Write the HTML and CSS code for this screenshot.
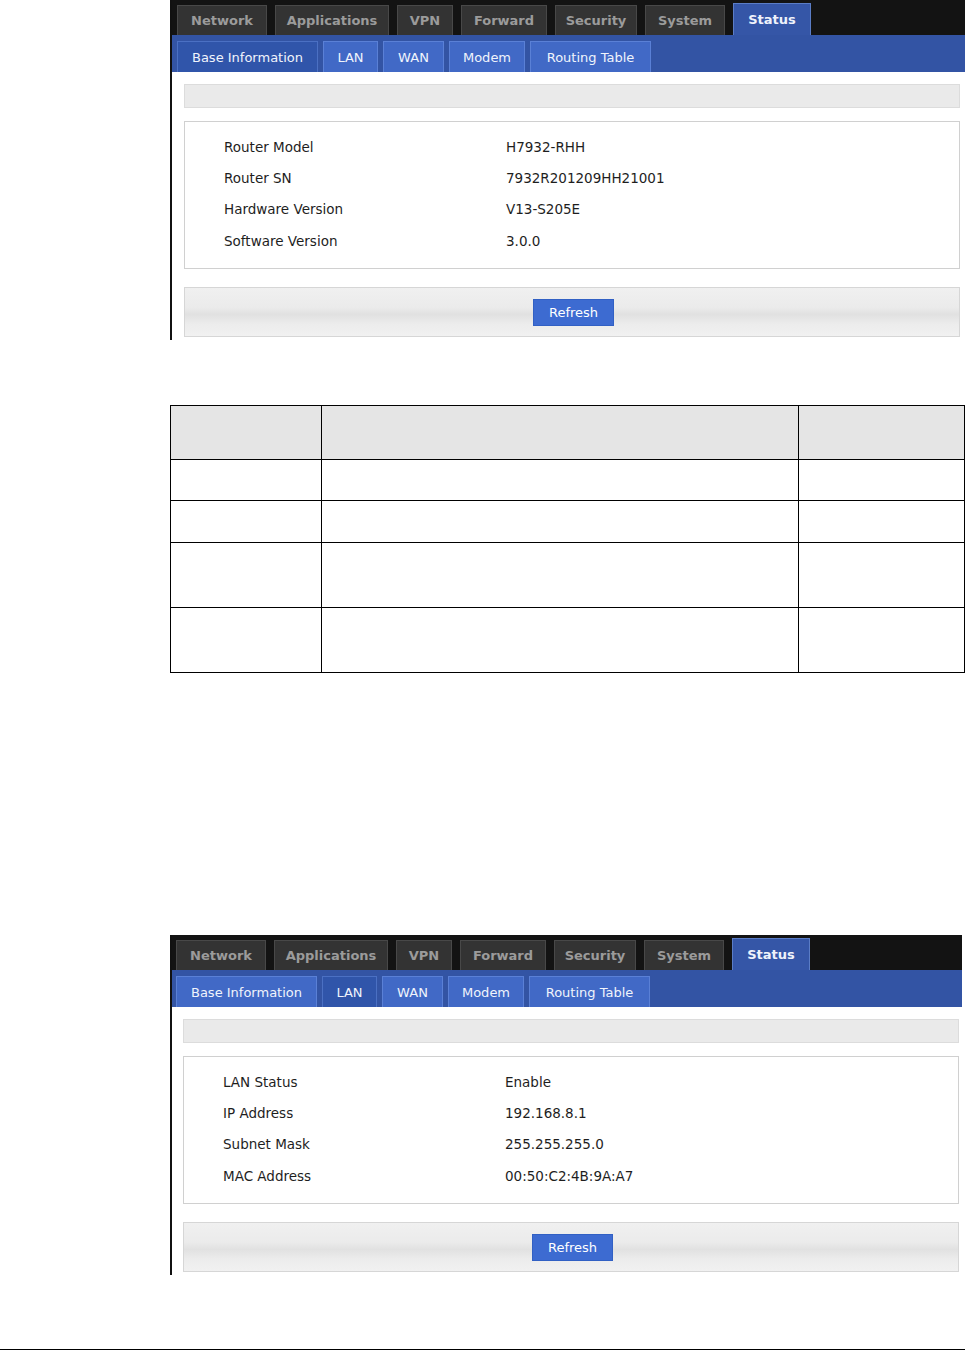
FILE: index.html
```html
<!DOCTYPE html>
<html lang="en">
<head>
    <meta charset="UTF-8">
    <title>Status - Base Information / LAN</title>
    <link rel="stylesheet" href="styles.css">
</head>
<body>
    <div class="page">
        <!-- screenshot 1: base information -->
        <div class="router">
            <div class="main-nav">
                <a>Network</a>
                <a>Applications</a>
                <a>VPN</a>
                <a>Forward</a>
                <a>Security</a>
                <a>System</a>
                <a class="active">Status</a>
            </div>
            <div class="sub-nav">
                <a class="active">Base Information</a>
                <a>LAN</a>
                <a>WAN</a>
                <a>Modem</a>
                <a>Routing Table</a>
            </div>
            <div class="content">
                <div class="title-bar"></div>
                <div class="info">
                    <div class="info-row"><span class="info-label">Router Model</span><span>H7932-RHH</span></div>
                    <div class="info-row"><span class="info-label">Router SN</span><span>7932R201209HH21001</span></div>
                    <div class="info-row"><span class="info-label">Hardware Version</span><span>V13-S205E</span></div>
                    <div class="info-row"><span class="info-label">Software Version</span><span>3.0.0</span></div>
                </div>
                <div class="actions">
                    <button class="btn">Refresh</button>
                </div>
            </div>
        </div>

        <table class="doc-table">
            <tr class="head"><td class="c1">&nbsp;</td><td class="c2">&nbsp;</td><td class="c3">&nbsp;</td></tr>
            <tr class="r-short"><td>&nbsp;</td><td>&nbsp;</td><td>&nbsp;</td></tr>
            <tr class="r-short2"><td>&nbsp;</td><td>&nbsp;</td><td>&nbsp;</td></tr>
            <tr class="r-tall"><td>&nbsp;</td><td>&nbsp;</td><td>&nbsp;</td></tr>
            <tr class="r-tall"><td>&nbsp;</td><td>&nbsp;</td><td>&nbsp;</td></tr>
        </table>

        <!-- screenshot 2: LAN -->
        <div class="router router-second">
            <div class="main-nav">
                <a>Network</a>
                <a>Applications</a>
                <a>VPN</a>
                <a>Forward</a>
                <a>Security</a>
                <a>System</a>
                <a class="active">Status</a>
            </div>
            <div class="sub-nav">
                <a>Base Information</a>
                <a class="active">LAN</a>
                <a>WAN</a>
                <a>Modem</a>
                <a>Routing Table</a>
            </div>
            <div class="content">
                <div class="title-bar"></div>
                <div class="info">
                    <div class="info-row"><span class="info-label">LAN Status</span><span>Enable</span></div>
                    <div class="info-row"><span class="info-label">IP Address</span><span>192.168.8.1</span></div>
                    <div class="info-row"><span class="info-label">Subnet Mask</span><span>255.255.255.0</span></div>
                    <div class="info-row"><span class="info-label">MAC Address</span><span>00:50:C2:4B:9A:A7</span></div>
                </div>
                <div class="actions">
                    <button class="btn">Refresh</button>
                </div>
            </div>
        </div>
    </div>
    <hr class="page-rule">
</body>
</html>
```

FILE: styles.css
```css
body {
    margin: 0;
    font-family: "DejaVu Sans", Verdana, sans-serif;
    background: #fff;
    color: #222;
}
.page {
    padding-left: 170px;
}

/* router ui screenshot */
.router {
    width: 795px;
    box-sizing: border-box;
    border-left: 2px solid #111;
    padding-bottom: 3px;
    background: #fff;
}
.main-nav {
    height: 35px;
    background: #131313;
    display: flex;
    align-items: flex-end;
    gap: 8px;
    padding-left: 5px;
}
.main-nav a {
    box-sizing: border-box;
    height: 30px;
    line-height: 29px;
    text-align: center;
    background: #333;
    border: 1px solid #484848;
    border-bottom: none;
    color: #9b9b9b;
    font-size: 13px;
    font-weight: bold;
}
/* tab widths as in the firmware ui */
.main-nav a:nth-child(1) { width: 90px; }
.main-nav a:nth-child(2) { width: 114px; }
.main-nav a:nth-child(3) { width: 56px; }
.main-nav a:nth-child(4) { width: 86px; }
.main-nav a:nth-child(5) { width: 82px; }
.main-nav a:nth-child(6) { width: 80px; }
.main-nav a:nth-child(7) { width: 78px; }
.main-nav a.active {
    height: 32px;
    line-height: 31px;
    background: #3556a7;
    border-color: #5b7dc6;
    color: #eef2fb;
}
.sub-nav {
    height: 37px;
    background: #3354a4;
    display: flex;
    align-items: flex-end;
    gap: 5px;
    padding-left: 5px;
}
.sub-nav a {
    box-sizing: border-box;
    height: 31px;
    line-height: 31px;
    text-align: center;
    background: #4169c6;
    border: 1px solid #5a80d6;
    border-bottom: none;
    color: #f0f4fc;
    font-size: 13px;
}
.sub-nav a:nth-child(1) { width: 141px; }
.sub-nav a:nth-child(2) { width: 55px; }
.sub-nav a:nth-child(3) { width: 61px; }
.sub-nav a:nth-child(4) { width: 76px; }
.sub-nav a:nth-child(5) { width: 121px; }
.sub-nav a.active {
    background: #3055aa;
    border-color: #4b70c3;
}
.content {
    padding: 12px 5px 0 12px;
}
.title-bar {
    height: 24px;
    box-sizing: border-box;
    background: #eaeaea;
    border: 1px solid #dcdcdc;
}
.info {
    margin-top: 13px;
    border: 1px solid #d0d0d0;
    padding: 9px 0 12px 39px;
}
.info-row {
    display: flex;
    align-items: center;
    height: 31.3px;
    font-size: 13.5px;
    color: #1e1e1e;
}
.info-label {
    width: 282px;
}
.actions {
    margin-top: 18px;
    height: 50px;
    box-sizing: border-box;
    border: 1px solid #d6d6d6;
    background: linear-gradient(#f0f0f0, #ebebeb 40%, #e1e1e1 55%, #ececec 75%, #f1f1f1);
    display: flex;
    align-items: center;
    justify-content: center;
}
.btn {
    width: 81px;
    height: 27px;
    background: #3d6bd1;
    border: 1px solid #3160c4;
    color: #fff;
    font-family: "DejaVu Sans", Verdana, sans-serif;
    font-size: 13px;
    padding: 0;
    margin-left: 3px;
}

.router-second {
    width: 792px;
    margin-top: 262px;
}
.router-second .main-nav,
.router-second .sub-nav {
    padding-left: 4px;
}
.router-second .content {
    padding: 12px 3px 0 11px;
}

/* empty document table */
.doc-table {
    margin-top: 65px;
    width: 795px;
    border-collapse: collapse;
    table-layout: fixed;
}
.doc-table td {
    border: 1.5px solid #000;
    padding: 0;
}
.doc-table .c1 { width: 150px; }
.doc-table .c2 { width: 476px; }
.doc-table .head td {
    background: #e5e5e5;
    height: 53px;
}
.doc-table .r-short td { height: 40px; }
.doc-table .r-short2 td { height: 41px; }
.doc-table .r-tall td { height: 64px; }

.page-rule {
    margin: 74px 0 0 0;
    border: none;
    border-top: 1.5px solid #000;
    width: 965px;
}
```
